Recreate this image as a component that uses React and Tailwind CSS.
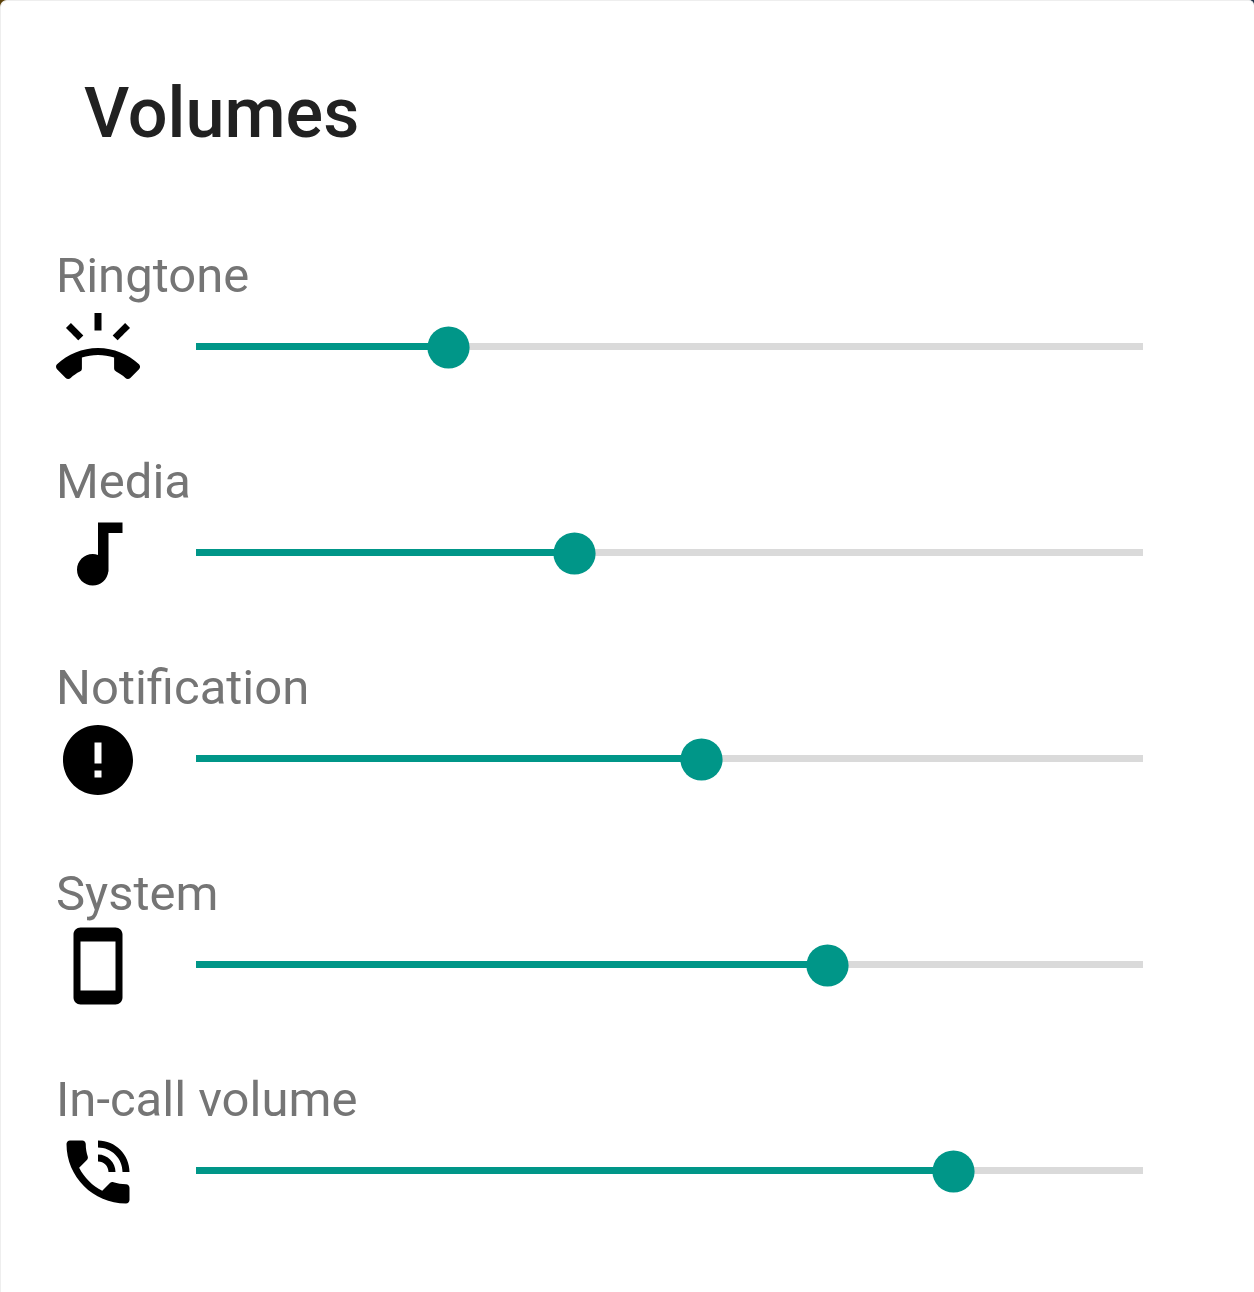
const paths = {
  ring: "M23.71 16.67C20.66 13.78 16.54 12 12 12S3.34 13.78.29 16.67c-.18.18-.29.43-.29.71s.11.53.29.71l2.48 2.48c.18.18.43.29.71.29.27 0 .52-.11.7-.28.79-.74 1.69-1.36 2.66-1.85.33-.16.56-.5.56-.9v-3.1c1.45-.48 3-.73 4.6-.73s3.15.25 4.6.72v3.1c0 .39.23.74.56.9.98.49 1.87 1.12 2.67 1.85.18.18.43.28.7.28.28 0 .53-.11.71-.29l2.48-2.48c.18-.18.29-.43.29-.71s-.12-.52-.3-.7zM21.16 6.26l-1.41-1.41-3.56 3.55 1.41 1.41s3.45-3.52 3.56-3.55zM13 2h-2v5h2V2zM6.4 9.81L7.81 8.4 4.26 4.84 2.84 6.26c.11.03 3.56 3.55 3.56 3.55z",
  music: "M12 3v9.28c-.47-.17-.97-.28-1.5-.28C8.01 12 6 14.01 6 16.5S8.01 21 10.5 21c2.31 0 4.2-1.75 4.45-4H15V6h4V3h-7z",
  alert: "M12 2C6.48 2 2 6.48 2 12s4.48 10 10 10 10-4.48 10-10S17.52 2 12 2zm1 15h-2v-2h2v2zm0-4h-2V7h2v6z",
  phone: "M17 1.01L7 1c-1.1 0-2 .9-2 2v18c0 1.1.9 2 2 2h10c1.1 0 2-.9 2-2V3c0-1.1-.9-1.99-2-1.99zM17 19H7V5h10v14z",
  call: "M20 15.5c-1.25 0-2.45-.2-3.57-.57-.35-.11-.74-.03-1.02.24l-2.2 2.2c-2.83-1.44-5.15-3.75-6.59-6.59l2.2-2.21c.28-.26.36-.65.25-1C8.7 6.45 8.5 5.25 8.5 4c0-.55-.45-1-1-1H4c-.55 0-1 .45-1 1 0 9.39 7.61 17 17 17 .55 0 1-.45 1-1v-3.5c0-.55-.45-1-1-1zM19 12h2c0-4.97-4.03-9-9-9v2c3.87 0 7 3.13 7 7zm-4 0h2c0-2.76-2.24-5-5-5v2c1.66 0 3 1.34 3 3z",
};

const rows = [
  { label: "Ringtone", icon: "ring", fill: 252.5 },
  { label: "Media", icon: "music", fill: 378.5 },
  { label: "Notification", icon: "alert", fill: 505.5 },
  { label: "System", icon: "phone", fill: 631.5 },
  { label: "In-call volume", icon: "call", fill: 757.5 },
];

function VolumeRow({ label, icon, fill }) {
  return (
    <div className="h-[206px]">
      <div className="h-[66px] text-[49px] leading-[66px] text-[#757575] whitespace-nowrap">{label}</div>
      <div className="-mt-[3px] flex h-[84px] items-center">
        <svg className="h-[84px] w-[84px] shrink-0" viewBox="0 0 24 24" fill="#000">
          <path d={paths[icon]} />
        </svg>
        <div className="relative mb-[3px] ml-14 h-[7px] w-[947px] bg-[#dadada]">
          <div className="h-full bg-[#009688]" style={{ width: fill }} />
          <svg
            className="absolute -top-[17px] h-[43px] w-[43px]"
            style={{ left: fill - 21.5 }}
            viewBox="0 0 43 43"
            fill="#009688"
          >
            <circle cx="21.5" cy="21.5" r="21.1" />
          </svg>
        </div>
      </div>
    </div>
  );
}

export default function App() {
  return (
    <div className="h-[1292px] w-[1254px] overflow-hidden bg-linear-to-r from-[#5b4008] to-[#20344a]">
      <div className="h-full w-full rounded-tl-[7px] rounded-tr-[5px] border-l border-t border-[#eeeeee] bg-white pl-[55px] font-['Roboto',sans-serif]">
        <h1 className="ml-[28px] h-[242px] pt-[67px] text-[70.2px] leading-[90px] font-medium text-[#212121]">Volumes</h1>
        {rows.map((row) => (
          <VolumeRow key={row.label} {...row} />
        ))}
      </div>
    </div>
  );
}
